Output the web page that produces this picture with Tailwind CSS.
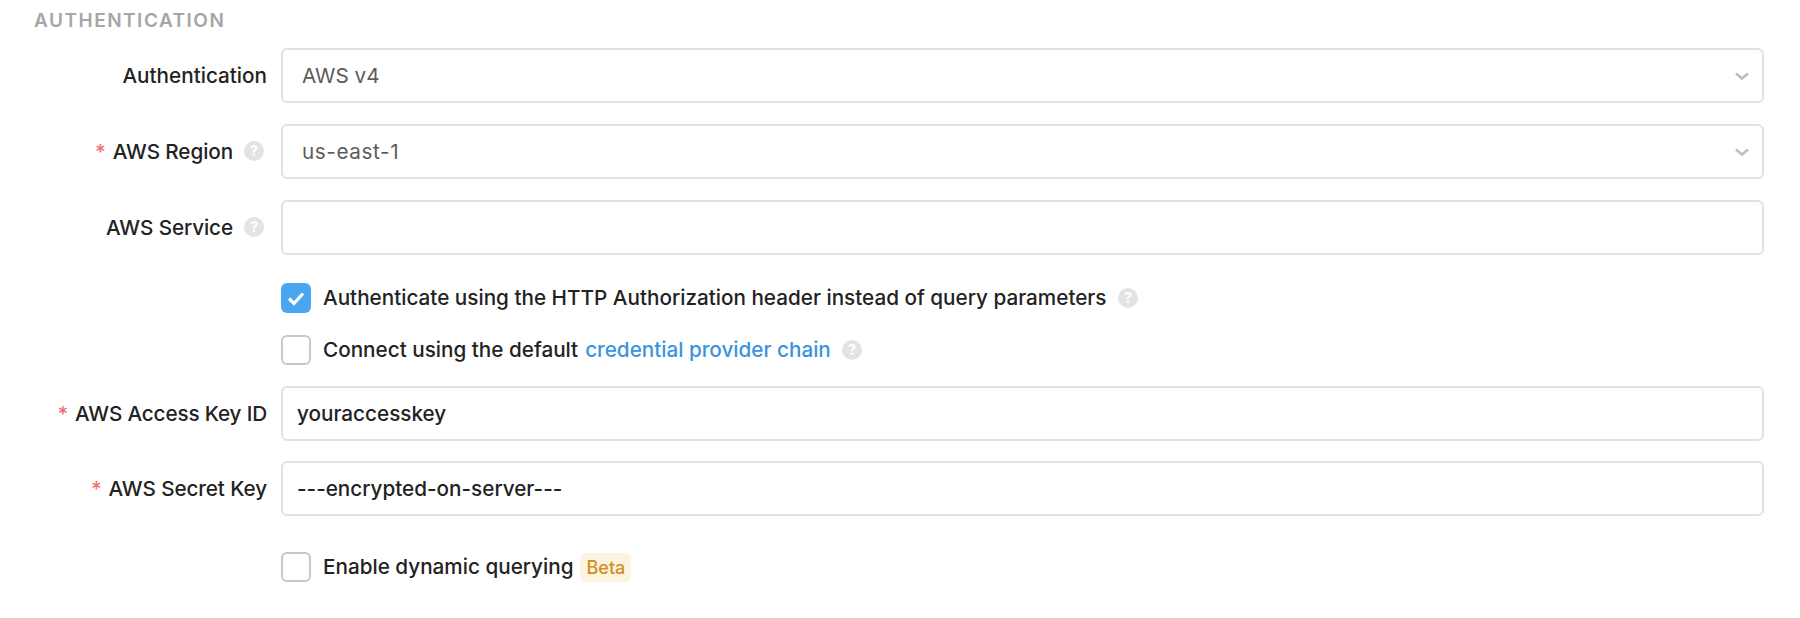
<!DOCTYPE html>
<html lang="en">
<head>
    <meta charset="UTF-8">
    <title>Authentication</title>
    <script src="https://cdn.jsdelivr.net/npm/@tailwindcss/browser@4"></script>
</head>
<body class="bg-white font-['Inter',sans-serif] text-[20.7px] font-[450] text-[#222222] h-[618px] overflow-hidden">

<div class="pr-[36px] pt-[9px]">
    <h2 class="pl-[34px] h-[24px] leading-[24px] text-[19px] font-semibold tracking-[1.5px] text-[#a6a6a6] mb-[15px]">AUTHENTICATION</h2>

    <!-- Auth type -->
    <div class="flex items-center h-[55px] mb-[21px]">
        <label class="w-[267px] text-right">Authentication</label>
        <div class="ml-[14px] flex-1 h-full flex items-center justify-between border-2 border-[#e2e2e2] rounded-[6px] pl-[19px] pr-[13px] text-[#5c5c5c] font-normal">
            <span>AWS v4</span>
            <svg class="w-[14px] h-[10px]" viewBox="0 0 14 10" fill="none" stroke="#bdbdbd" stroke-width="2.6"><path d="M1 2.500l6 5 6-5"/></svg>
        </div>
    </div>

    <!-- Region -->
    <div class="flex items-center h-[55px] mb-[21px]">
        <label class="w-[267px] flex items-center justify-end">
            <span class="text-[#f0707a] mr-[7px]">*</span><span class="tracking-[-0.1px]">AWS Region</span>
            <svg class="w-[20px] h-[20px] ml-[11px] mr-[3px]" viewBox="0 0 20 20"><circle cx="10" cy="10" r="10" fill="#e3e3e3"/><text x="10" y="15" text-anchor="middle" font-size="14.500" font-weight="700" fill="#fff" font-family="Inter">?</text></svg>
        </label>
        <div class="ml-[14px] flex-1 h-full flex items-center justify-between border-2 border-[#e2e2e2] rounded-[6px] pl-[19px] pr-[13px] text-[#5c5c5c] font-normal">
            <span class="tracking-[0.6px]">us-east-1</span>
            <svg class="w-[14px] h-[10px]" viewBox="0 0 14 10" fill="none" stroke="#bdbdbd" stroke-width="2.6"><path d="M1 2.500l6 5 6-5"/></svg>
        </div>
    </div>

    <!-- Service -->
    <div class="flex items-center h-[55px] mb-[28px]">
        <label class="w-[267px] flex items-center justify-end">
            <span class="tracking-[-0.1px]">AWS Service</span>
            <svg class="w-[20px] h-[20px] ml-[11px] mr-[3px]" viewBox="0 0 20 20"><circle cx="10" cy="10" r="10" fill="#e3e3e3"/><text x="10" y="15" text-anchor="middle" font-size="14.500" font-weight="700" fill="#fff" font-family="Inter">?</text></svg>
        </label>
        <div class="ml-[14px] flex-1 h-full border-2 border-[#e2e2e2] rounded-[6px]"></div>
    </div>

    <!-- Checkboxes -->
    <div class="pl-[281px] flex items-center h-[30px] mb-[22px]">
        <span class="w-[30px] h-[30px] rounded-[6px] bg-[#4ba6f2] flex items-center justify-center mr-[12px]">
            <svg class="w-[18px] h-[18px]" viewBox="0 0 18 18" fill="none" stroke="#fff" stroke-width="3.200"><path d="M2 9.500l5 5 9-10"/></svg>
        </span>
        <span class="pb-[1px]">Authenticate using the HTTP Authorization header instead of query parameters</span>
        <svg class="w-[20px] h-[20px] ml-[11px]" viewBox="0 0 20 20"><circle cx="10" cy="10" r="10" fill="#e3e3e3"/><text x="10" y="15" text-anchor="middle" font-size="14.500" font-weight="700" fill="#fff" font-family="Inter">?</text></svg>
    </div>
    <div class="pl-[281px] flex items-center h-[30px] mb-[21px]">
        <span class="w-[30px] h-[30px] rounded-[6px] border-2 border-[#c8c8c8] mr-[12px]"></span>
        <span class="pb-[1px]">Connect using the default</span><a class="text-[#3a93e0] ml-[7px] pb-[1px]">credential provider chain</a>
        <svg class="w-[20px] h-[20px] ml-[11px]" viewBox="0 0 20 20"><circle cx="10" cy="10" r="10" fill="#e3e3e3"/><text x="10" y="15" text-anchor="middle" font-size="14.500" font-weight="700" fill="#fff" font-family="Inter">?</text></svg>
    </div>

    <!-- Keys -->
    <div class="flex items-center h-[55px] mb-[20px]">
        <label class="w-[267px] text-right tracking-[-0.15px]"><span class="text-[#f0707a] mr-[7px]">*</span>AWS Access Key ID</label>
        <div class="ml-[14px] flex-1 h-full flex items-center border-2 border-[#e2e2e2] rounded-[6px] pl-[14px]">youraccesskey</div>
    </div>
    <div class="flex items-center h-[55px] mb-[36px]">
        <label class="w-[267px] text-right tracking-[-0.1px]"><span class="text-[#f0707a] mr-[7px]">*</span>AWS Secret Key</label>
        <div class="ml-[14px] flex-1 h-full flex items-center border-2 border-[#e2e2e2] rounded-[6px] pl-[14px]">---encrypted-on-server---</div>
    </div>

    <div class="pl-[281px] flex items-center h-[30px]">
        <span class="w-[30px] h-[30px] rounded-[6px] border-2 border-[#c8c8c8] mr-[12px]"></span>
        <span class="pb-[1px]">Enable dynamic querying</span>
        <span class="ml-[7px] h-[29px] px-[6px] flex items-center rounded-[6px] bg-[#fdf3e0] text-[#d0901e] text-[18px]">Beta</span>
    </div>
</div>

</body>
</html>
